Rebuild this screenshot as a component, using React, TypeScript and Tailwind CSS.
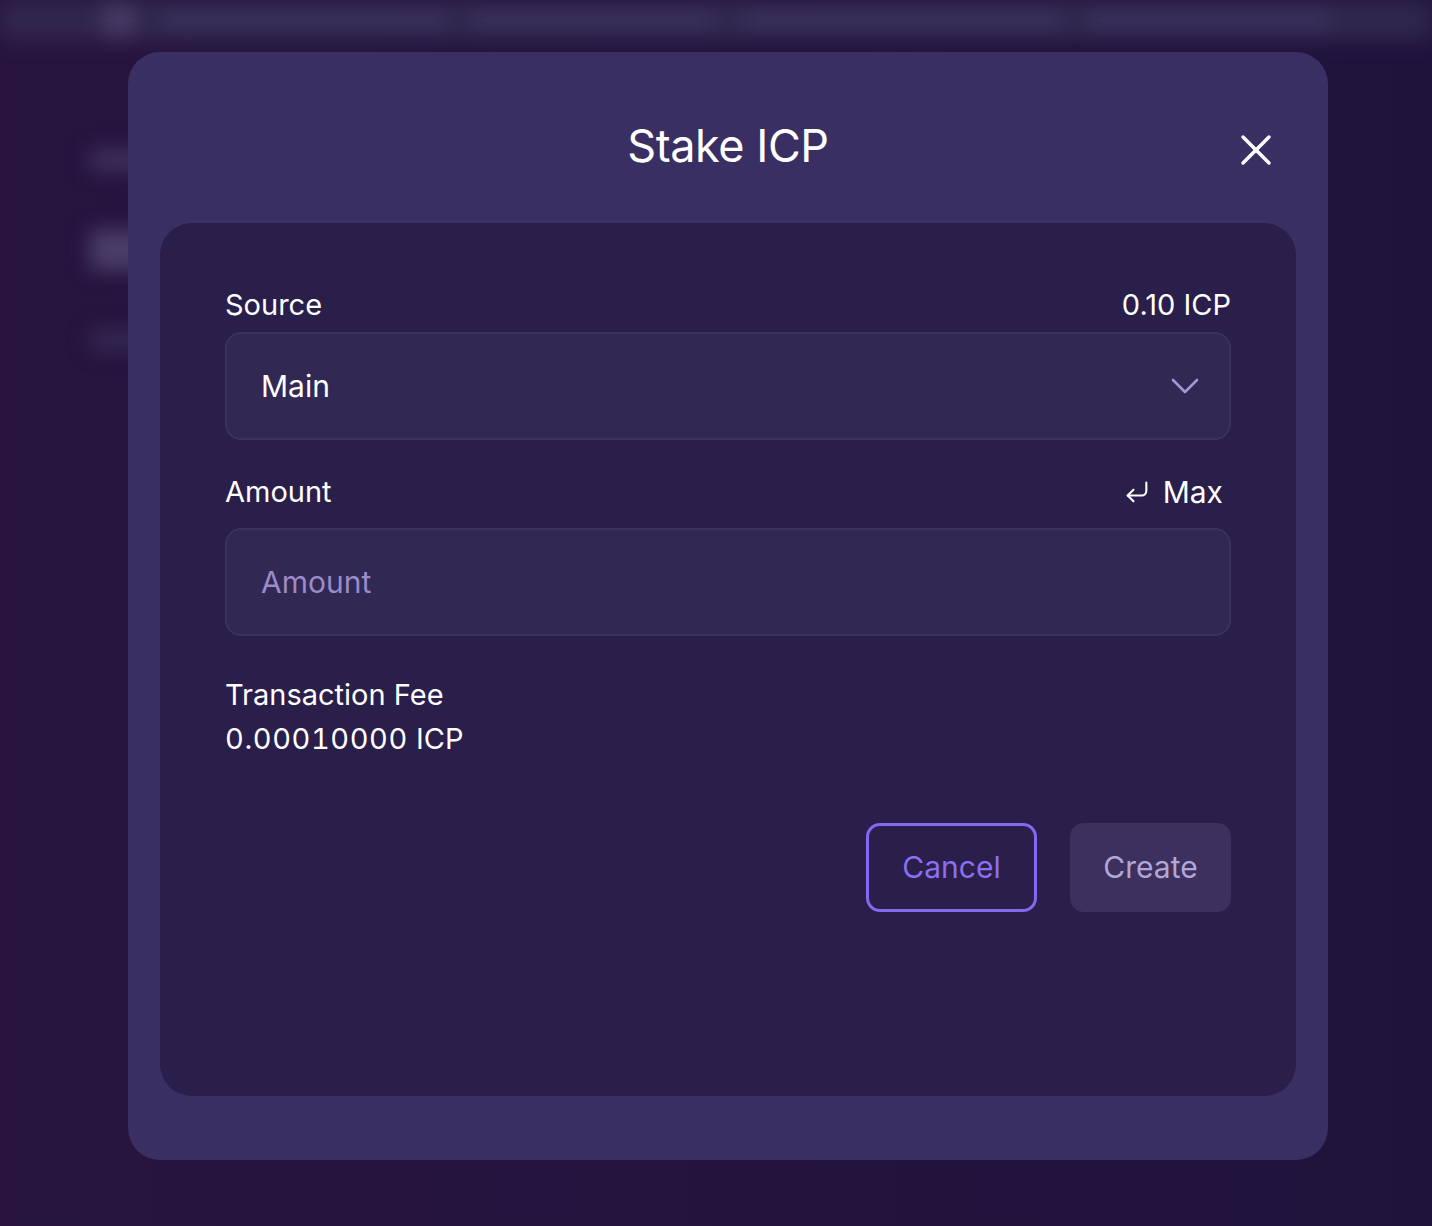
import { X, ChevronDown, CornerDownLeft } from "lucide-react";

function BackgroundPage() {
  return (
    <div className="absolute inset-0 blur-[10px]">
      <div className="flex h-[40px] items-center gap-6 bg-[#30274c] px-[100px]">
        <div className="size-[40px] rounded-full bg-[#443a62]" />
        <div className="h-[18px] w-[300px] rounded bg-[#3b3260]" />
        <div className="h-[18px] w-[260px] rounded bg-[#3b3260]" />
        <div className="h-[18px] w-[340px] rounded bg-[#3b3260]" />
        <div className="h-[18px] w-[260px] rounded bg-[#3b3260]" />
      </div>
      <div className="flex flex-col gap-[60px] px-[90px] pt-[110px]">
        <div className="h-[20px] w-[80px] rounded bg-[#3e3460]" />
        <div className="h-[40px] w-[60px] rounded bg-[#4a3f6a]" />
        <div className="h-[20px] w-[70px] rounded bg-[#342a52]" />
      </div>
    </div>
  );
}

function Field({ children }: { children: React.ReactNode }) {
  return (
    <div className="flex h-[108px] items-center justify-between rounded-[16px] border-2 border-[#3b325f] bg-[#312854] pl-[34px] pr-[20px]">
      {children}
    </div>
  );
}

export default function App() {
  return (
    <div
      className="relative h-[1226px] w-full overflow-hidden bg-gradient-to-r from-[#28143f] to-[#1f133c] text-white"
      style={{ fontFamily: "Inter, 'Noto Sans', sans-serif" }}
    >
      <BackgroundPage />

      <div className="absolute left-[128px] top-[52px] flex h-[1108px] w-[1200px] flex-col rounded-[32px] bg-[#3a2f63] px-[32px] pb-[64px]">
        <div className="relative flex h-[171px] items-center justify-center pt-[16px]">
          <h2 className="text-[45px] font-normal tracking-[-0.01em]">Stake ICP</h2>
          <button className="absolute right-[14px] top-[72px] text-white" aria-label="Close">
            <X className="size-[52px]" strokeWidth={1.6} />
          </button>
        </div>

        <div className="flex flex-1 flex-col rounded-[32px] bg-[#2a1e4b] px-[65px] pt-[64px]">
          <div className="flex items-center justify-between text-[29px] leading-[36px]">
            <span>Source</span>
            <span>0.10 ICP</span>
          </div>
          <div className="mt-[9px]">
            <Field>
              <span className="text-[30px]">Main</span>
              <ChevronDown className="size-[48px] text-[#a596d6]" strokeWidth={1.3} />
            </Field>
          </div>

          <div className="mt-[34px] flex items-center justify-between text-[29px] leading-[36px]">
            <span>Amount</span>
            <button className="flex items-center gap-[12px] pr-[8px]">
              <CornerDownLeft className="size-[28px]" strokeWidth={1.8} />
              <span className="text-[30px]">Max</span>
            </button>
          </div>
          <div className="mt-[18px]">
            <Field>
              <span className="text-[30px] text-[#9a8bc9]">Amount</span>
            </Field>
          </div>

          <div className="mt-[37px] flex flex-col text-[29px] leading-[44px]">
            <span>Transaction Fee</span>
            <span>
              <span className="tracking-[0.02em] tabular-nums">0.00010000</span> ICP
            </span>
          </div>

          <div className="mt-[62px] flex justify-end gap-[33px]">
            <button className="h-[89px] w-[171px] rounded-[14px] border-[3px] border-[#8667f0] text-[30px] text-[#8b6ef2]">
              Cancel
            </button>
            <button className="h-[89px] w-[161px] rounded-[14px] bg-[#3c305f] text-[30px] text-[#b2a6d8]">
              Create
            </button>
          </div>
        </div>
      </div>
    </div>
  );
}
